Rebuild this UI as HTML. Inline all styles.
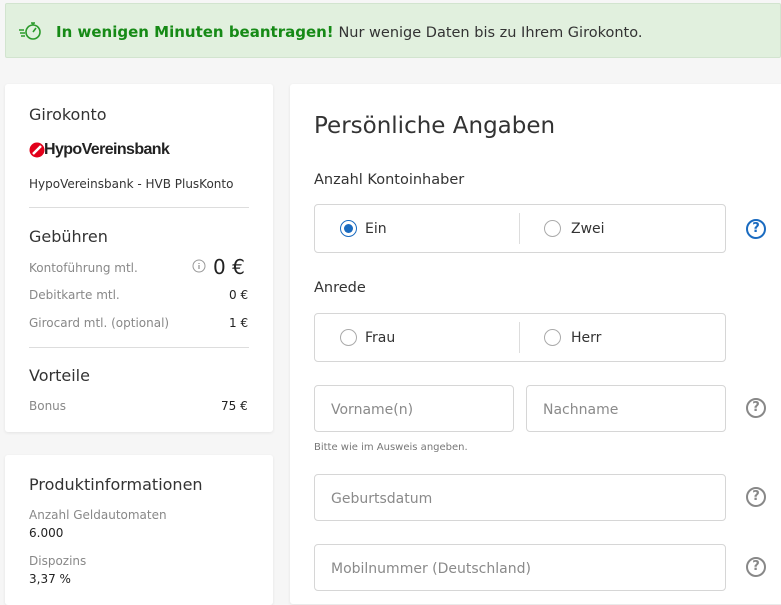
<!DOCTYPE html>
<html><head><meta charset="utf-8"><style>
*{margin:0;padding:0;box-sizing:border-box}
body{width:781px;height:595px;overflow:hidden;background:#f6f6f6;font-family:"DejaVu Sans","Liberation Sans",sans-serif;color:#333;position:relative}
.a{position:absolute;white-space:nowrap}
.card{position:absolute;background:#fff;border-radius:3px;box-shadow:0 1px 3px rgba(0,0,0,.08)}
.h{font-size:16px;color:#333}
.lbl{font-size:12px;color:#888}
.val{font-size:12px;color:#222}
.div{position:absolute;height:1px;background:#ddd}
.box{position:absolute;border:1px solid #d6d6d6;border-radius:4px;background:#fff}
.rad{position:absolute;width:17px;height:17px;border:1px solid #aaa;border-radius:50%;background:#fff}
.ph{font-size:14px;color:#8a8a8a}
.q{position:absolute;width:20px;height:20px;border:2px solid #888;border-radius:50%;font-size:13px;font-weight:bold;color:#888;text-align:center;line-height:16px}
</style></head><body>
<div class="a" style="left:5px;top:3px;width:776px;height:55px;background:#e1f0de;border:1px solid #d2e4cf;border-radius:2px"></div>
<svg class="a" style="left:18px;top:20px" width="26" height="22" viewBox="0 0 26 22"><g fill="none" stroke="#2a9a2a" stroke-width="1.6"><circle cx="15" cy="12" r="7"/><path d="M13 3h4M15 3v2M15 12l3-4M1 10h5M2 13h5M3 16h4"/></g></svg>
<div class="a" style="left:56px;top:23px;font-size:15px;line-height:18px"><b style="color:#168a16">In wenigen Minuten beantragen!</b> <span style="color:#333;font-size:14.5px">Nur wenige Daten bis zu Ihrem Girokonto.</span></div>

<div class="card" style="left:5px;top:84px;width:268px;height:348px"></div>
<div class="a h" style="left:29px;top:105px">Girokonto</div>
<svg class="a" style="left:29px;top:142px" width="16" height="16"><circle cx="8" cy="8" r="7.5" fill="#e2001a"/><path d="M4 12L12 4" stroke="#fff" stroke-width="2.5"/></svg>
<div class="a" style="left:44px;top:141px;font-family:'Liberation Sans',sans-serif;font-size:16px;font-weight:bold;letter-spacing:-0.6px;color:#222">HypoVereinsbank</div>
<div class="a" style="left:29px;top:177px;font-size:12px;color:#333">HypoVereinsbank - HVB PlusKonto</div>
<div class="div" style="left:29px;top:207px;width:220px"></div>
<div class="a h" style="left:29px;top:227px">Gebühren</div>
<div class="a lbl" style="left:29px;top:261px">Kontoführung mtl.</div>
<svg class="a" style="left:192px;top:259px" width="14" height="14"><circle cx="7" cy="7" r="6" fill="none" stroke="#999"/><path d="M7 6v4M7 4v1" stroke="#999" stroke-width="1.3"/></svg>
<div class="a" style="left:213px;top:255px;font-size:20px;color:#222">0 €</div>
<div class="a lbl" style="left:29px;top:288px">Debitkarte mtl.</div>
<div class="a val" style="left:229px;top:288px">0 €</div>
<div class="a lbl" style="left:29px;top:316px">Girocard mtl. (optional)</div>
<div class="a val" style="left:229px;top:316px">1 €</div>
<div class="div" style="left:29px;top:347px;width:220px"></div>
<div class="a h" style="left:29px;top:366px">Vorteile</div>
<div class="a lbl" style="left:29px;top:399px">Bonus</div>
<div class="a val" style="left:221px;top:399px">75 €</div>

<div class="card" style="left:5px;top:455px;width:268px;height:150px"></div>
<div class="a h" style="left:29px;top:475px">Produktinformationen</div>
<div class="a lbl" style="left:29px;top:508px">Anzahl Geldautomaten</div>
<div class="a val" style="left:29px;top:526px">6.000</div>
<div class="a lbl" style="left:29px;top:554px">Dispozins</div>
<div class="a val" style="left:29px;top:572px">3,37 %</div>

<div class="card" style="left:290px;top:84px;width:500px;height:520px"></div>
<div class="a" style="left:314px;top:113px;font-size:23px;color:#333">Persönliche Angaben</div>
<div class="a" style="left:314px;top:172px;font-size:14.5px">Anzahl Kontoinhaber</div>
<div class="box" style="left:314px;top:204px;width:412px;height:49px"></div>
<div class="a" style="left:519px;top:213px;width:1px;height:31px;background:#ddd"></div>
<div class="rad" style="left:340px;top:220px;border-color:#1a6bc0"></div>
<div class="a" style="left:344px;top:224px;width:9px;height:9px;border-radius:50%;background:#1a6bc0"></div>
<div class="a" style="left:365px;top:221px;font-size:14px">Ein</div>
<div class="rad" style="left:544px;top:220px"></div>
<div class="a" style="left:571px;top:221px;font-size:14px">Zwei</div>
<div class="q" style="left:746px;top:219px;border-color:#1a6bc0;color:#1a6bc0">?</div>
<div class="a" style="left:314px;top:280px;font-size:14.5px">Anrede</div>
<div class="box" style="left:314px;top:313px;width:412px;height:49px"></div>
<div class="a" style="left:519px;top:322px;width:1px;height:31px;background:#ddd"></div>
<div class="rad" style="left:340px;top:329px"></div>
<div class="a" style="left:365px;top:330px;font-size:14px">Frau</div>
<div class="rad" style="left:544px;top:329px"></div>
<div class="a" style="left:571px;top:330px;font-size:14px">Herr</div>

<div class="box" style="left:314px;top:385px;width:200px;height:47px"></div>
<div class="a ph" style="left:331px;top:402px">Vorname(n)</div>
<div class="box" style="left:526px;top:385px;width:200px;height:47px"></div>
<div class="a ph" style="left:543px;top:402px">Nachname</div>
<div class="q" style="left:746px;top:398px">?</div>
<div class="a" style="left:314px;top:442px;font-size:10px;color:#777">Bitte wie im Ausweis angeben.</div>
<div class="box" style="left:314px;top:474px;width:412px;height:47px"></div>
<div class="a ph" style="left:331px;top:491px">Geburtsdatum</div>
<div class="q" style="left:746px;top:487px">?</div>
<div class="box" style="left:314px;top:544px;width:412px;height:47px"></div>
<div class="a ph" style="left:331px;top:561px">Mobilnummer (Deutschland)</div>
<div class="q" style="left:746px;top:557px">?</div>
</body></html>
